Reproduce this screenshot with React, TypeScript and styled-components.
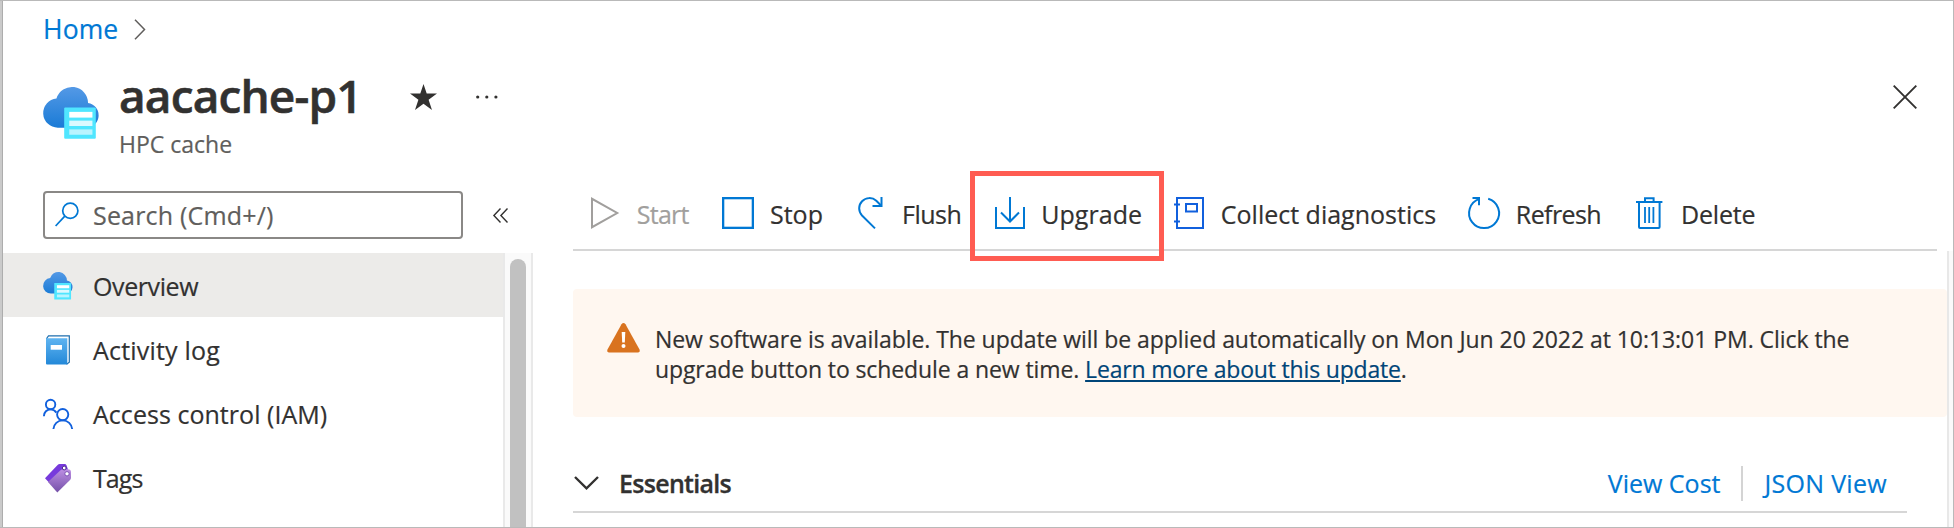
import React from "react";
import styled, { createGlobalStyle } from "styled-components";

const GlobalStyle = createGlobalStyle`
  * { box-sizing: border-box; }
  body {
    margin: 0;
    background: #fff;
    color: #323130;
    font-family: "Open Sans", "Noto Sans", sans-serif;
    font-size: 25px;
    -webkit-text-stroke: 0.2px currentColor;
  }
  svg { display: block; flex: none; overflow: visible; }
`;

const Frame = styled.div`
  display: flex;
  flex-direction: column;
  width: 1954px;
  height: 528px;
  overflow: hidden;
  border: 1px solid #b9b9b9;
  border-left: 0;
  box-shadow: inset 2px 0 0 #cacaca, inset 3px 0 0 #adadad;
  padding-left: 3px;
`;

const Text = styled.span<{ $ls?: number }>`
  white-space: pre;
  letter-spacing: ${(p) => p.$ls ?? 0}px;
`;

/* Header */
const Breadcrumb = styled.nav`
  display: flex;
  align-items: center;
  flex: none;
  height: 56px;
  padding-left: 40px;
  gap: 15px;
`;

const HomeLink = styled.a`
  width: 76px;
  color: #0078d4;
  font-size: 26.5px;
  line-height: 36px;
  letter-spacing: 0.1px;
`;

const ResourceHeader = styled.header`
  display: flex;
  align-items: flex-start;
  flex: none;
  height: 114px;
  padding: 0 36px 0 40px;
`;

const ResourceIcon = styled.div`
  width: 76px;
  padding-top: 30px;
`;

const TitleBlock = styled.div`
  display: flex;
  flex-direction: column;
  padding-top: 8px;
`;

const TitleRow = styled.div`
  display: flex;
  align-items: center;
  height: 60px;
`;

const Title = styled.h1`
  margin: 0;
  width: 291px;
  font-size: 46px;
  font-weight: 600;
  line-height: 60px;
  letter-spacing: -0.85px;
  -webkit-text-stroke-width: 0.6px;
`;

const StarSlot = styled.div`
  width: 66px;
  padding-top: 4px;
`;

const DotsSlot = styled.div`
  padding-top: 3px;
`;

const Subtitle = styled.div`
  margin-top: 3px;
  color: #605e5c;
  font-size: 23px;
  line-height: 32px;
  letter-spacing: 0;
`;

const CloseButton = styled.div`
  margin: 28px 0 0 auto;
`;

/* Body */
const Body = styled.div`
  display: flex;
  flex: 1;
  min-height: 0;
`;

const Sidebar = styled.aside`
  display: flex;
  flex-direction: column;
  flex: none;
  width: 530px;
  padding-top: 20px;
`;

const SearchRow = styled.div`
  display: flex;
  align-items: center;
  flex: none;
  height: 48px;
  margin-bottom: 14px;
  padding-left: 40px;
  gap: 30px;
`;

const SearchBox = styled.div`
  display: flex;
  align-items: center;
  width: 420px;
  height: 48px;
  padding: 0 0 1px 10px;
  gap: 14px;
  border: 2px solid #8a8886;
  border-radius: 4px;
  color: #605e5c;
`;

const MenuArea = styled.div`
  display: flex;
  flex: 1;
  min-height: 0;
`;

const Menu = styled.ul`
  width: 500px;
  margin: 0;
  padding: 0;
  list-style: none;
`;

const MenuItem = styled.li<{ $active?: boolean }>`
  display: flex;
  align-items: center;
  height: 64px;
  padding: 2px 0 0 40px;
  background: ${(p) => (p.$active ? "#ecebe9" : "transparent")};
`;

const MenuIcon = styled.div`
  display: flex;
  justify-content: center;
  width: 30px;
  margin-right: 20px;
`;

const ScrollTrack = styled.div`
  display: flex;
  justify-content: center;
  width: 30px;
  padding-top: 6px;
  background: #fafafa;
  border: solid #e9e9e9;
  border-width: 0 2px;
`;

const ScrollThumb = styled.div`
  width: 16px;
  height: 320px;
  border-radius: 8px;
  background: #c1c1c1;
`;

const Main = styled.main`
  display: flex;
  flex-direction: column;
  flex: 1;
  margin-left: 40px;
`;

const Toolbar = styled.div`
  display: grid;
  grid-template-columns: 131px 136px 137px 179px 294px 168px 1fr;
  flex: none;
  width: 1364px;
  height: 80px;
  padding: 6px 0 0 18px;
  border-bottom: 2px solid #d6d6d6;
`;

const ToolButton = styled.div<{ $disabled?: boolean }>`
  position: relative;
  display: flex;
  align-items: center;
  height: 72px;
  color: ${(p) => (p.$disabled ? "#a19f9d" : "#323130")};
`;

const ToolIcon = styled.div<{ $slot: number }>`
  flex: none;
  width: ${(p) => p.$slot}px;
`;

const ToolLabel = styled(Text)`
  padding-top: 2px;
`;

const Highlight = styled.div`
  position: absolute;
  left: -25px;
  top: -6px;
  width: 194px;
  height: 90px;
  border: 5px solid #ff5c52;
`;

const Scroller = styled.div`
  display: flex;
  flex: 1;
  min-height: 0;
`;

const Content = styled.div`
  flex: 1;
  padding-top: 38px;
`;

const MainTrack = styled.div`
  flex: none;
  width: 6px;
  background: #fafafa;
  border-left: 2px solid #e8e8e8;
`;

const Banner = styled.div`
  display: flex;
  height: 128px;
  padding: 34px 0 0 34px;
  gap: 15px;
  border-radius: 4px;
  background: #fff7f0;
`;

const BannerText = styled.div`
  padding-top: 1px;
  font-size: 23px;
  line-height: 30px;
`;

const BannerLink = styled.a`
  color: #004578;
  letter-spacing: -0.18px;
  text-decoration: underline;
  text-decoration-thickness: 2px;
  text-underline-offset: 2px;
`;

const Essentials = styled.div`
  display: flex;
  align-items: center;
  width: 1334px;
  height: 96px;
  padding: 38px 20px 0 1px;
  border-bottom: 2px solid #d6d6d6;
`;

const EssentialsTitle = styled.h2`
  flex: 1;
  margin: 0 0 0 20px;
  font-size: 25px;
  font-weight: 600;
  letter-spacing: -0.7px;
  -webkit-text-stroke-width: 0.3px;
`;

const ViewLink = styled.a<{ $ls: number }>`
  color: #0078d4;
  letter-spacing: ${(p) => p.$ls}px;
`;

const LinkDivider = styled.div`
  width: 2px;
  height: 35px;
  margin: 0 21px;
  background: #d4d4d4;
`;

const CacheIcon = ({ width, id }: { width: number; id: string }) => (
  <svg width={width} height={(width * 154) / 168} viewBox="39 50 168 154">
    <defs>
      <linearGradient id={id} x1="0" y1="0" x2="0" y2="1">
        <stop offset="0" stopColor="#5499e6" />
        <stop offset="1" stopColor="#1a7bd6" />
      </linearGradient>
    </defs>
    <path
      d="M83 171H170A37 37 0 0 0 173 97.500A48 48 0 0 0 79 84A43.600 43.600 0 0 0 83 171Z"
      fill={`url(#${id})`}
    />
    <rect x="102" y="111" width="94" height="93" rx="3" fill="#50e6ff" />
    <rect x="117" y="124" width="69" height="17" fill="#fff" />
    <rect x="117" y="150" width="69" height="16" fill="#dcf9ff" />
    <rect x="117" y="176" width="69" height="16" fill="#b9f4ff" />
  </svg>
);

const BookIcon = () => (
  <svg width="24" height="30" viewBox="0 0 24 30">
    <defs>
      <linearGradient id="book" x1="0" y1="0" x2="0" y2="1">
        <stop offset="0" stopColor="#5fb4f1" />
        <stop offset="1" stopColor="#2388d8" />
      </linearGradient>
    </defs>
    <path d="M0.600 3.500L2.500 0.800H23.300V27.200L21 29Z" fill="#fff" stroke="#1f6fae" strokeWidth="1.200" />
    <path d="M0 3.200H21.300V29.400H1A1 1 0 0 1 0 28.400Z" fill="url(#book)" />
    <rect x="4.700" y="10" width="11.300" height="4.700" fill="#fff" />
  </svg>
);

const PeopleIcon = () => (
  <svg width="30" height="30" viewBox="0 0 30 30" fill="none" stroke="#1160dd" strokeWidth="1.900">
    <circle cx="7.600" cy="5.500" r="4.700" />
    <path d="M0.900 17.200C0.900 13 4 10.400 7.600 10.400C10 10.400 12 11.500 13.400 13.600" />
    <circle cx="19.700" cy="15.600" r="5.600" />
    <path d="M10.400 30C10.900 25 14.500 21.400 19.700 21.400S28.600 25 29.200 30" />
  </svg>
);

const TagIcon = () => (
  <svg width="26" height="29" viewBox="0 0 26 29">
    <defs>
      <linearGradient id="tag" x1="0" y1="0" x2="0" y2="1">
        <stop offset="0" stopColor="#bd8fe3" />
        <stop offset="1" stopColor="#7450a8" />
      </linearGradient>
    </defs>
    <path d="M0 14.300L12.600 1Q13.400 0 14.800 0H19.500Q21 0 21.600 1.400L23 5.500L4 18.500Z" fill="#773adc" />
    <path d="M3 18L15.500 6.200Q16.600 5.200 18 5.200H23Q26 5.200 26 8.200V13.500Q26 15 25 16L12.300 28.500Z" fill="url(#tag)" />
    <circle cx="19.200" cy="4" r="1.900" fill="#fff" stroke="#4b2a8c" strokeWidth="1" />
    <circle cx="22" cy="9.800" r="2.200" fill="#fff" stroke="#7a4fb5" strokeWidth="1" />
  </svg>
);

const blue = "#0078d4";

const StartIcon = () => (
  <svg width="28" height="32" viewBox="0 0 28 32" fill="none" stroke="#a19f9d" strokeWidth="2">
    <path d="M1 1.800V30.200L26.200 16Z" />
  </svg>
);

const StopIcon = () => (
  <svg width="32" height="32" viewBox="0 0 32 32" fill="none" stroke={blue} strokeWidth="2.300">
    <rect x="1.150" y="1.150" width="29.700" height="29.700" />
  </svg>
);

const FlushIcon = () => (
  <svg width="25" height="32" viewBox="0 0 25 32" fill="none" stroke={blue} strokeWidth="2">
    <path d="M17 31.400L4 18.500A10.300 10.300 0 0 1 18.300 3.700L23.300 8.700" />
    <path d="M23.500 0V9H14.500" />
  </svg>
);

const UpgradeIcon = () => (
  <svg width="30" height="32" viewBox="0 0 30 32" fill="none" stroke={blue} strokeWidth="2">
    <path d="M1 10V31H29V10" />
    <path d="M15 0V24.500M6 15.500L15 24.500L24 15.500" />
  </svg>
);

const DiagnosticsIcon = () => (
  <svg width="30" height="32" viewBox="0 0 30 32" fill="none" stroke="#1160dd" strokeWidth="2">
    <rect x="3" y="1" width="26" height="30" />
    <rect x="12" y="7" width="11" height="7.500" />
    <path d="M0 7.500H6M0 24.500H6" />
  </svg>
);

const RefreshIcon = () => (
  <svg width="32" height="32" viewBox="0 0 32 32" fill="none" stroke={blue} strokeWidth="2">
    <path d="M20.200 1.700A15 15 0 1 1 11.300 1.900" />
    <path d="M4.500 1H11V8.300" />
  </svg>
);

const DeleteIcon = () => (
  <svg width="27" height="32" viewBox="0 0 27 32" fill="none" stroke={blue} strokeWidth="2">
    <path d="M0 5H26.400M9 5V1.200H17.600V5" />
    <path d="M3 5V30Q3 31 4 31H22.600Q23.600 31 23.600 30V5" />
    <path d="M9 10V26M13.200 10V26M17.400 10V26" strokeWidth="1.800" />
  </svg>
);

const tools = [
  { label: "Start", Icon: StartIcon, slot: 45.7, ls: -0.7, disabled: true },
  { label: "Stop", Icon: StopIcon, slot: 48, ls: 0 },
  { label: "Flush", Icon: FlushIcon, slot: 44, ls: -0.49 },
  { label: "Upgrade", Icon: UpgradeIcon, slot: 46.2, ls: 0.05 },
  { label: "Collect diagnostics", Icon: DiagnosticsIcon, slot: 46.8, ls: 0 },
  { label: "Refresh", Icon: RefreshIcon, slot: 47.8, ls: -0.6 },
  { label: "Delete", Icon: DeleteIcon, slot: 45, ls: -0.2 },
];

const highlightedTool = "Upgrade";

const menu = [
  { label: "Overview", icon: <CacheIcon width={30} id="cloud-small" />, ls: -0.4, active: true },
  { label: "Activity log", icon: <BookIcon />, ls: 0.2 },
  { label: "Access control (IAM)", icon: <PeopleIcon />, ls: 0.04 },
  { label: "Tags", icon: <TagIcon />, ls: -0.9 },
];

export default function App() {
  return (
    <>
      <GlobalStyle />
      <Frame>
        <Breadcrumb>
          <HomeLink>Home</HomeLink>
          <svg width="12" height="21" viewBox="0 0 12 21" fill="none" stroke="#605e5c" strokeWidth="1.500">
            <path d="M1 0.800L10.500 10.500L1 20.200" />
          </svg>
        </Breadcrumb>
        <ResourceHeader>
          <ResourceIcon>
            <CacheIcon width={56.5} id="cloud-large" />
          </ResourceIcon>
          <TitleBlock>
            <TitleRow>
              <Title>aacache-p1</Title>
              <StarSlot>
                <svg width="27" height="26" viewBox="0 0 27 26" fill="#323130">
                  <path d="M13.500 0L16.700 9.600H27L18.600 15.700L22 26L13.500 19.800L5 26L8.400 15.700L0 9.600H10.300Z" />
                </svg>
              </StarSlot>
              <DotsSlot>
                <svg width="22" height="4" viewBox="0 0 22 4" fill="#323130">
                  <circle cx="1.700" cy="2" r="1.600" />
                  <circle cx="10.800" cy="2" r="1.600" />
                  <circle cx="19.900" cy="2" r="1.600" />
                </svg>
              </DotsSlot>
            </TitleRow>
            <Subtitle>HPC cache</Subtitle>
          </TitleBlock>
          <CloseButton>
            <svg width="24" height="24" viewBox="0 0 24 24" stroke="#323130" strokeWidth="1.900">
              <path d="M0.700 0.700L23.300 23.300M23.300 0.700L0.700 23.300" />
            </svg>
          </CloseButton>
        </ResourceHeader>
        <Body>
          <Sidebar>
            <SearchRow>
              <SearchBox>
                <svg width="24" height="25" viewBox="0 0 24 25" fill="none" stroke={blue} strokeWidth="1.700">
                  <circle cx="15.300" cy="8.700" r="7.600" />
                  <path d="M9.800 14.200L0.600 24" />
                </svg>
                <Text $ls={0.18}>Search (Cmd+/)</Text>
              </SearchBox>
              <svg width="15" height="15" viewBox="0 0 15 15" fill="none" stroke="#323130" strokeWidth="1.400">
                <path d="M7.500 0.500L0.900 7.500L7.500 14.500M14.500 0.500L7.900 7.500L14.500 14.500" />
              </svg>
            </SearchRow>
            <MenuArea>
              <Menu>
                {menu.map((m) => (
                  <MenuItem key={m.label} $active={m.active}>
                    <MenuIcon>{m.icon}</MenuIcon>
                    <Text $ls={m.ls}>{m.label}</Text>
                  </MenuItem>
                ))}
              </Menu>
              <ScrollTrack>
                <ScrollThumb />
              </ScrollTrack>
            </MenuArea>
          </Sidebar>
          <Main>
            <Toolbar>
              {tools.map(({ label, Icon, slot, ls, disabled }) => (
                <ToolButton key={label} $disabled={disabled}>
                  <ToolIcon $slot={slot}>
                    <Icon />
                  </ToolIcon>
                  <ToolLabel $ls={ls}>{label}</ToolLabel>
                  {label === highlightedTool && <Highlight />}
                </ToolButton>
              ))}
            </Toolbar>
            <Scroller>
              <Content>
                <Banner>
                  <svg width="33" height="30" viewBox="0 0 33 30">
                    <path
                      d="M14.500 1.200Q16.500 -1.200 18.500 1.200L32.500 26.500Q33.500 29.400 30.800 29.500H2.200Q-0.500 29.400 0.500 26.500Z"
                      fill="#d9731f"
                    />
                    <path d="M14.700 9H18.300L17.800 19.500H15.200Z" fill="#fff" />
                    <circle cx="16.500" cy="23" r="2" fill="#fff" />
                  </svg>
                  <BannerText>
                    <div>
                      <Text $ls={-0.055}>
                        New software is available. The update will be applied automatically on Mon Jun 20 2022 at
                        10:13:01 PM. Click the
                      </Text>
                    </div>
                    <div>
                      <Text $ls={-0.1}>{"upgrade button to schedule a new time. "}</Text>
                      <BannerLink>Learn more about this update</BannerLink>.
                    </div>
                  </BannerText>
                </Banner>
                <Essentials>
                  <svg width="25" height="14" viewBox="0 0 25 14" fill="none" stroke="#323130" strokeWidth="2.400">
                    <path d="M1 1L12.500 12.300L24 1" />
                  </svg>
                  <EssentialsTitle>Essentials</EssentialsTitle>
                  <ViewLink $ls={0}>View Cost</ViewLink>
                  <LinkDivider />
                  <ViewLink $ls={0.3}>JSON View</ViewLink>
                </Essentials>
              </Content>
              <MainTrack />
            </Scroller>
          </Main>
        </Body>
      </Frame>
    </>
  );
}
